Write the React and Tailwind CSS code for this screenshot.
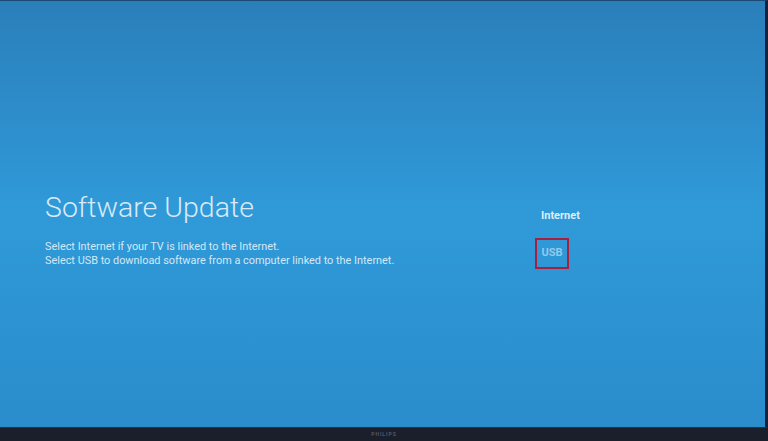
export default function App() {
  return (
    <div className="flex h-[441px] w-[768px] flex-col overflow-hidden bg-[#1b1e2b] font-['Roboto',sans-serif]">
      <div className="flex flex-1 border-t border-r-[3px] border-b border-t-[#1d4a72] border-r-[#17223a] border-b-[#14385a] bg-gradient-to-b from-[#2a7fba] via-[#309ad9] to-[#2a8ccb]">
        <div className="flex pl-[45px] pt-[189px]">
          <div className="w-[490px]">
            <h1 className="text-[28.5px] leading-[36px] font-light text-[#d8eaf7]">Software Update</h1>
            <div className="mt-[14px] text-[10.9px] leading-[14px] text-[#d3e8f6]">
              <p>Select Internet if your TV is linked to the Internet.</p>
              <p>Select USB to download software from a computer linked to the Internet.</p>
            </div>
          </div>
          <div className="mt-[19px] flex flex-col">
            <span className="ml-[6px] text-[11px] leading-[14px] font-bold text-[#dcedf9]">Internet</span>
            <div className="mt-[15px] flex h-[31px] w-[34px] items-center justify-center border-2 border-[#a91f3c]">
              <span className="text-[11px] font-bold text-[#92c9ec]">USB</span>
            </div>
          </div>
        </div>
      </div>
      <div className="flex h-[13px] items-center justify-center">
        <span className="text-[5px] font-bold tracking-[1px] text-[#55586a]">PHILIPS</span>
      </div>
    </div>
  );
}
